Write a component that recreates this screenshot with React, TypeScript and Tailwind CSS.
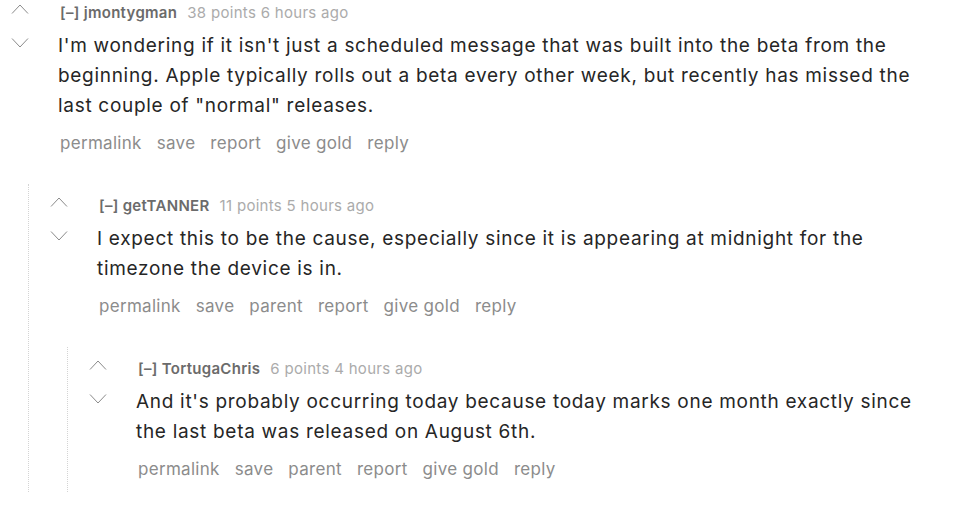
import React from "react";

type CommentData = {
  author: string;
  points: number;
  age: string;
  body: string;
  links: string[];
  children?: CommentData[];
};

const thread: CommentData = {
  author: "jmontygman",
  points: 38,
  age: "6 hours ago",
  body: "I'm wondering if it isn't just a scheduled message that was built into the beta from the beginning. Apple typically rolls out a beta every other week, but recently has missed the last couple of \"normal\" releases.",
  links: ["permalink", "save", "report", "give gold", "reply"],
  children: [
    {
      author: "getTANNER",
      points: 11,
      age: "5 hours ago",
      body: "I expect this to be the cause, especially since it is appearing at midnight for the timezone the device is in.",
      links: ["permalink", "save", "parent", "report", "give gold", "reply"],
      children: [
        {
          author: "TortugaChris",
          points: 6,
          age: "4 hours ago",
          body: "And it's probably occurring today because today marks one month exactly since the last beta was released on August 6th.",
          links: ["permalink", "save", "parent", "report", "give gold", "reply"],
        },
      ],
    },
  ],
};

function Chevron({ up }: { up?: boolean }) {
  return (
    <svg width="18" height="10" viewBox="0 0 18 10" className="block">
      <path
        d={up ? "M1 9.5 L9 1 L17 9.5" : "M1 0.5 L9 9 L17 0.5"}
        fill="none"
        stroke="#8a8a8a"
        strokeWidth="1"
      />
    </svg>
  );
}

function Comment({ c }: { c: CommentData }) {
  return (
    <div className={c.children == null ? "pb-[11px]" : ""}>
      <div className="flex">
        <div className="w-[47px] shrink-0 pt-[4px]">
          <Chevron up />
          <div className="mt-[24px]">
            <Chevron />
          </div>
        </div>
        <div className="flex-1 min-w-0">
          <div className="pt-[3px] pl-[2px] text-[15px] leading-[20px] tracking-[0.3px]">
            <span className="font-semibold text-[#6b6b6b]">[–] {c.author}</span>
            <span className="ml-[10px] text-[#ababab]">
              {c.points} points {c.age}
            </span>
          </div>
          <div className="mt-[8px] text-[19px] leading-[30px] tracking-[0.7px] text-[#262626]">
            {c.body}
          </div>
          <div className="mt-[10px] pl-[2px] flex gap-[15px] text-[17px] leading-[24px] tracking-[0.3px] text-[#8c8c8c]">
            {c.links.map((l) => (
              <span key={l}>{l}</span>
            ))}
          </div>
        </div>
      </div>
      {c.children == null ? null : (
        <div className="mt-[29px] ml-[17px] border-l border-dotted border-[#d4d4d4] pl-[21px] pt-[9px]">
          {c.children.map((child) => (
            <Comment key={child.author} c={child} />
          ))}
        </div>
      )}
    </div>
  );
}

export default function App() {
  return (
    <div
      className="min-h-[513px] w-[960px] bg-white pl-[11px] pr-[30px]"
      style={{ fontFamily: "Inter, 'Noto Sans', sans-serif" }}
    >
      <Comment c={thread} />
    </div>
  );
}
